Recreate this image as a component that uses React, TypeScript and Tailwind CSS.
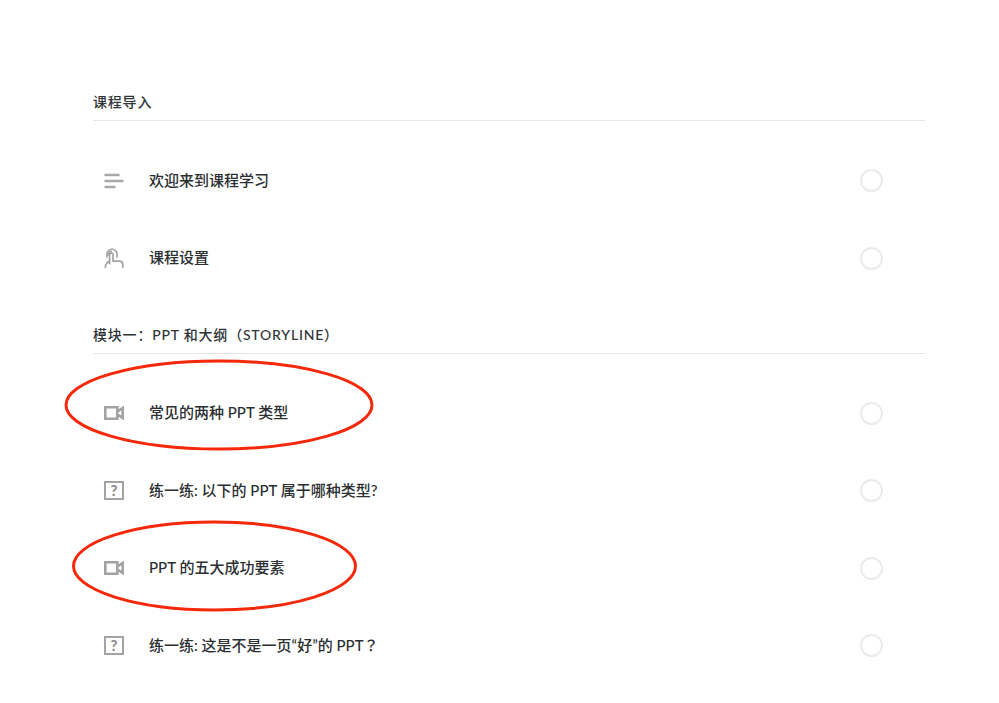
const FONT = "font-['Lato','Noto_Sans_CJK_SC',sans-serif]";

const LinesIcon = () => (
  <svg width="20" height="16" viewBox="0 0 20 16" fill="none" stroke="#a8a8a8" strokeWidth="2.6">
    <path d="M0.5 2h15M0.5 8h19M0.5 14h11" />
  </svg>
);

const TouchIcon = () => (
  <svg width="20" height="21" viewBox="0 0 20 21" fill="none" stroke="#a3a3a3" strokeWidth="1.7">
    <path d="M3.2 9.5C1.8 4.5 4.6 1 8 1s6.2 3.5 4.8 8.5" />
    <path d="M4.6 7.5C4.4 4.8 6 3.4 8 3.4" />
    <path d="M1.2 20l0.6-3.2 2.2-3 1.6 1.4V6.6c0-2 3.4-2 3.4 0v6.6h6.6c2 0 3.2 1 3.2 3v3.8" />
  </svg>
);

const VideoIcon = () => (
  <svg width="20" height="14" viewBox="0 0 20 14" fill="none" stroke="#a3a3a3" strokeWidth="2.6">
    <path d="M1.3 1.3h12v11.4h-12zM13.3 5.6L18.7 2v10L13.3 8.4" />
  </svg>
);

const QuizIcon = () => (
  <div className="flex h-[19px] w-[20px] items-center justify-center border-[2.5px] border-[#a3a3a3] text-[15px] font-black leading-none text-[#8f8f8f]">
    ?
  </div>
);

const Row = ({ icon, title }: { icon: React.ReactNode; title: React.ReactNode }) => (
  <div className="flex h-[77.5px] items-center">
    <div className="ml-[11px] flex w-[20px] justify-center">{icon}</div>
    <div className="ml-[25px] flex-1 pb-[2px] text-[15px] font-medium text-[#2b2f32]">{title}</div>
    <div className="mr-[42px] h-[23px] w-[23px] rounded-full border-[2.5px] border-[#ebebeb]" />
  </div>
);

const Heading = ({ title }: { title: string }) => (
  <div className="h-[29px] border-b border-[#e6e6e6] text-[14px] font-medium leading-[19px] tracking-[0.8px] text-[#2f3437]">
    {title}
  </div>
);

export default function App() {
  return (
    <div className={`${FONT} relative h-[703px] w-[999px] overflow-hidden bg-white pl-[93px] pr-[74px] pt-[92px]`}>
      <Heading title="课程导入" />
      <div className="mt-[21px]">
        <Row icon={<LinesIcon />} title="欢迎来到课程学习" />
        <Row icon={<TouchIcon />} title="课程设置" />
      </div>
      <div className="mt-[28px]">
        <Heading title="模块一：PPT 和大纲（STORYLINE）" />
      </div>
      <div className="mt-[20.5px]">
        <Row icon={<VideoIcon />} title="常见的两种 PPT 类型" />
        <Row icon={<QuizIcon />} title="练一练: 以下的 PPT 属于哪种类型?" />
        <Row icon={<VideoIcon />} title="PPT 的五大成功要素" />
        <Row
          icon={<QuizIcon />}
          title={
            <>
              练一练: 这是不是一页“好”的 PPT<span className="font-['Noto_Sans_CJK_TC',sans-serif]">？</span>
            </>
          }
        />
      </div>

      {/* hand drawn red circles over the list */}
      <svg className="pointer-events-none absolute left-0 top-0" width="999" height="703" fill="none" stroke="#f5290a" strokeWidth="3">
        <ellipse cx="219" cy="405" rx="153" ry="44" />
        <ellipse cx="214.5" cy="566" rx="141" ry="44" />
      </svg>
    </div>
  );
}
